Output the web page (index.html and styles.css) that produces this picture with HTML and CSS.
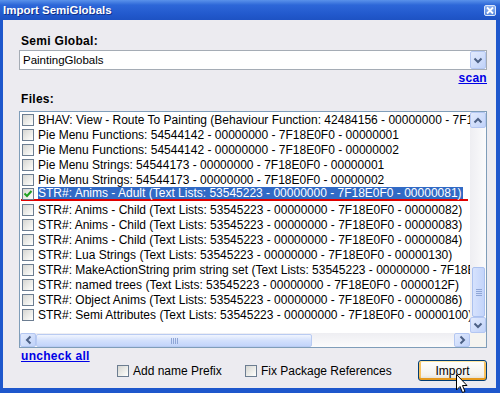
FILE: index.html
```html
<!DOCTYPE html>
<html lang="en">
<head>
  <meta charset="UTF-8">
  <title>Import SemiGlobals</title>
  <link rel="stylesheet" href="styles.css">
</head>
<body>
  <div class="window">
    <div class="titlebar">
      <span class="title">Import SemiGlobals</span>
      <span class="close">
        <svg width="10" height="9" viewBox="0 0 10 9"><path d="M2 1.5 L8 7.5 M8 1.5 L2 7.5" stroke="#fff" stroke-width="1.8"/></svg>
      </span>
    </div>

    <div class="frame">
      <div class="field-label">Semi Global:</div>
      <div class="combo">
        <span class="combo-value">PaintingGlobals</span>
        <span class="sb-btn combo-btn">
          <svg width="10" height="7" viewBox="0 0 10 7"><path d="M1.5 1.5 L5 5 L8.5 1.5" fill="none" stroke="#4d6185" stroke-width="2"/></svg>
        </span>
      </div>
      <div class="scan-row"><a class="link" href="#">scan</a></div>

      <div class="field-label files">Files:</div>
      <div class="list">
        <div class="rows">
          <div class="row"><span class="cb"></span><span class="text">BHAV: View - Route To Painting (Behaviour Function: 42484156 - 00000000 - 7F18E0F0 - 00001000)</span></div>
          <div class="row"><span class="cb"></span><span class="text">Pie Menu Functions: 54544142 - 00000000 - 7F18E0F0 - 00000001</span></div>
          <div class="row"><span class="cb"></span><span class="text">Pie Menu Functions: 54544142 - 00000000 - 7F18E0F0 - 00000002</span></div>
          <div class="row"><span class="cb"></span><span class="text">Pie Menu Strings: 54544173 - 00000000 - 7F18E0F0 - 00000001</span></div>
          <div class="row"><span class="cb"></span><span class="text">Pie Menu Strings: 54544173 - 00000000 - 7F18E0F0 - 00000002</span></div>
          <div class="row sel"><span class="cb checked"><svg width="10" height="10" viewBox="0 0 10 10"><path d="M1.5 4.5 L4 7 L8.5 2" fill="none" stroke="#21a121" stroke-width="2"/></svg></span><span class="text">STR#: Anims - Adult (Text Lists: 53545223 - 00000000 - 7F18E0F0 - 00000081)</span></div>
          <div class="row"><span class="cb"></span><span class="text">STR#: Anims - Child (Text Lists: 53545223 - 00000000 - 7F18E0F0 - 00000082)</span></div>
          <div class="row"><span class="cb"></span><span class="text">STR#: Anims - Child (Text Lists: 53545223 - 00000000 - 7F18E0F0 - 00000083)</span></div>
          <div class="row"><span class="cb"></span><span class="text">STR#: Anims - Child (Text Lists: 53545223 - 00000000 - 7F18E0F0 - 00000084)</span></div>
          <div class="row"><span class="cb"></span><span class="text">STR#: Lua Strings (Text Lists: 53545223 - 00000000 - 7F18E0F0 - 00000130)</span></div>
          <div class="row"><span class="cb"></span><span class="text">STR#: MakeActionString prim string set (Text Lists: 53545223 - 00000000 - 7F18E0F0 - 00000131)</span></div>
          <div class="row"><span class="cb"></span><span class="text">STR#: named trees (Text Lists: 53545223 - 00000000 - 7F18E0F0 - 0000012F)</span></div>
          <div class="row"><span class="cb"></span><span class="text">STR#: Object Anims (Text Lists: 53545223 - 00000000 - 7F18E0F0 - 00000086)</span></div>
          <div class="row"><span class="cb"></span><span class="text">STR#: Semi Attributes (Text Lists: 53545223 - 00000000 - 7F18E0F0 - 00000100)</span></div>
        </div>

        <!-- vertical scrollbar, scrolled to the bottom -->
        <div class="vscroll">
          <span class="sb-btn"><svg width="10" height="7" viewBox="0 0 10 7"><path d="M1.5 5.5 L5 2 L8.5 5.5" fill="none" stroke="#4d6185" stroke-width="2"/></svg></span>
          <div class="vtrack">
            <div class="vthumb"><span class="grip-v"></span></div>
          </div>
          <span class="sb-btn"><svg width="10" height="7" viewBox="0 0 10 7"><path d="M1.5 1.5 L5 5 L8.5 1.5" fill="none" stroke="#4d6185" stroke-width="2"/></svg></span>
        </div>

        <!-- horizontal scrollbar -->
        <div class="hscroll">
          <span class="sb-btn"><svg width="7" height="10" viewBox="0 0 7 10"><path d="M5.5 1.5 L2 5 L5.5 8.5" fill="none" stroke="#4d6185" stroke-width="2"/></svg></span>
          <div class="hthumb"><span class="grip-h"></span></div>
          <div class="htrack"></div>
          <span class="sb-btn"><svg width="7" height="10" viewBox="0 0 7 10"><path d="M1.5 1.5 L5 5 L1.5 8.5" fill="none" stroke="#4d6185" stroke-width="2"/></svg></span>
        </div>
        <div class="corner"></div>
      </div>

      <div class="bottom">
        <a class="link uncheck" href="#">uncheck all</a>
        <label class="option first"><span class="cb"></span>Add name Prefix</label>
        <label class="option"><span class="cb"></span>Fix Package References</label>
        <button class="button" type="button">Import</button>
      </div>
    </div>

    <!-- mouse pointer hovering the Import button -->
    <svg class="pointer" width="13" height="21" viewBox="0 0 13 21">
      <path d="M0.5 0.5 L0.5 16 L4 12.5 L6.5 18.5 L9 17.5 L6.5 11.5 L11 11.5 Z" fill="#fff" stroke="#000" stroke-width="1"/>
    </svg>
  </div>
</body>
</html>
```

FILE: styles.css
```css
* {
  box-sizing: border-box;
}
body {
  margin: 0;
  font-family: "Liberation Sans", Arial, sans-serif;
  font-size: 12px;
  color: #000;
  background: #ecebf0;
}
.window {
  position: relative;
  width: 500px;
  height: 393px;
  display: flex;
  flex-direction: column;
  overflow: hidden;
}
.titlebar {
  flex: 0 0 20px;
  display: flex;
  align-items: center;
  justify-content: space-between;
  padding: 0 4px 0 3px;
  background: linear-gradient(#5a92ea, #2d67d8 25%, #2259cd 70%, #1d52c3);
  color: #fff;
}
.title {
  font-weight: bold;
  font-size: 11.5px;
  text-shadow: 1px 1px 0 #10308a;
}
.close {
  width: 12px;
  height: 11px;
  display: flex;
  align-items: center;
  justify-content: center;
  border: 1px solid #dbe6fa;
  border-radius: 2px;
  background: linear-gradient(#8fb2f0, #5a8ae0);
}
.frame {
  flex: 1;
  border: solid #1e57cc;
  border-width: 0 4px 5px 3px;
  padding: 15px 9px 0 16px;
  background: #ecebf0;
}
.field-label {
  font-weight: bold;
  letter-spacing: 0.3px;
  line-height: 13px;
  padding-left: 2px;
}
.field-label.files {
  margin-top: 8px;
}
.combo {
  margin-top: 2px;
  height: 20px;
  display: flex;
  border: 1px solid #a5acb5;
  background: #fff;
}
.combo-value {
  flex: 1;
  padding-left: 3px;
  line-height: 18px;
  font-size: 11.5px;
}
.scan-row {
  margin-top: 2px;
  line-height: 13px;
  text-align: right;
}
.link {
  color: #0000e6;
  font-weight: bold;
  letter-spacing: 0.3px;
  text-decoration: underline;
}

/* list box with checkboxes */
.list {
  margin-top: 5px;
  height: 237px;
  display: grid;
  grid-template-columns: 1fr 16px;
  grid-template-rows: 221px 14px;
  border: 1px solid #7f9db9;
  background: #fff;
}
.rows {
  overflow: hidden;
  white-space: nowrap;
}
.row {
  height: 15px;
  display: flex;
  align-items: center;
  padding-left: 2px;
}
.cb {
  flex: 0 0 12px;
  width: 12px;
  height: 12px;
  margin-right: 4px;
  display: flex;
  align-items: center;
  justify-content: center;
  border: 1px solid #6c7d91;
  background: linear-gradient(135deg, #d6d6d2, #f7f7f4 80%, #fff);
}
.row.sel {
  align-items: flex-start;
  background: linear-gradient(#e00000, #e00000) no-repeat 1px 12px / 447px 2px;
}
.row.sel .cb {
  margin-top: 1px;
}
.row.sel .text {
  background: #316ac5;
  color: #fff;
  line-height: 12px;
  padding-right: 1px;
}

/* scrollbars */
.sb-btn {
  display: flex;
  align-items: center;
  justify-content: center;
  border: 1px solid #b4c7f2;
  border-radius: 2px;
  background: linear-gradient(135deg, #e3ebfd, #c0d2f9);
}
.combo-btn {
  flex: 0 0 16px;
}
.vscroll {
  display: flex;
  flex-direction: column;
  background: linear-gradient(to right, #eeeef2, #fbfbfc);
}
.vscroll .sb-btn {
  height: 16px;
}
.vtrack {
  flex: 1;
  display: flex;
  flex-direction: column;
  justify-content: flex-end;
  padding: 0 1px 0 2px;
}
.vthumb {
  height: 50px;
  display: flex;
  align-items: center;
  justify-content: center;
  border: 1px solid #abc1ef;
  border-radius: 2px;
  background: linear-gradient(to right, #d6e2fd, #c3d4fa);
}
.grip-v {
  width: 6px;
  height: 7px;
  background: repeating-linear-gradient(#8fa6d6 0 1px, transparent 1px 2px);
}
.hscroll {
  display: flex;
  background: linear-gradient(#eeeef2, #fbfbfc);
}
.hscroll .sb-btn {
  width: 16px;
}
.hthumb {
  width: 276px;
  display: flex;
  align-items: center;
  justify-content: center;
  margin: 1px 0 0;
  border: 1px solid #b9cbf2;
  border-radius: 2px;
  background: linear-gradient(#f1f5fe, #d3e0fc 50%, #c2d4fa);
}
.grip-h {
  width: 7px;
  height: 6px;
  background: repeating-linear-gradient(to right, #8fa6d6 0 1px, transparent 1px 2px);
}
.htrack {
  flex: 1;
}
.corner {
  background: #f5f4f0;
}

/* bottom row */
.bottom {
  display: flex;
  align-items: flex-start;
  margin-top: 2px;
  padding-left: 2px;
}
.uncheck {
  flex: 0 0 96px;
  line-height: 13px;
}
.option {
  display: flex;
  align-items: center;
  height: 13px;
  margin-top: 14px;
}
.option.first {
  flex: 0 0 128px;
}
.button {
  margin-left: auto;
  margin-top: 10px;
  width: 69px;
  height: 21px;
  padding: 0;
  font-family: "Liberation Sans", Arial, sans-serif;
  font-size: 12px;
  color: #000;
  border: 1px solid #003c74;
  border-radius: 3px;
  background: linear-gradient(#fffffe, #f2f1ec 75%, #dcd8cc);
  box-shadow: inset 0 1px 0 #ffe7a2, inset 0 -2px 0 #e59a1c, inset 2px 0 0 #f8c25e, inset -2px 0 0 #f8c25e;
}
.pointer {
  position: absolute;
  left: 456px;
  top: 374px;
}
```
